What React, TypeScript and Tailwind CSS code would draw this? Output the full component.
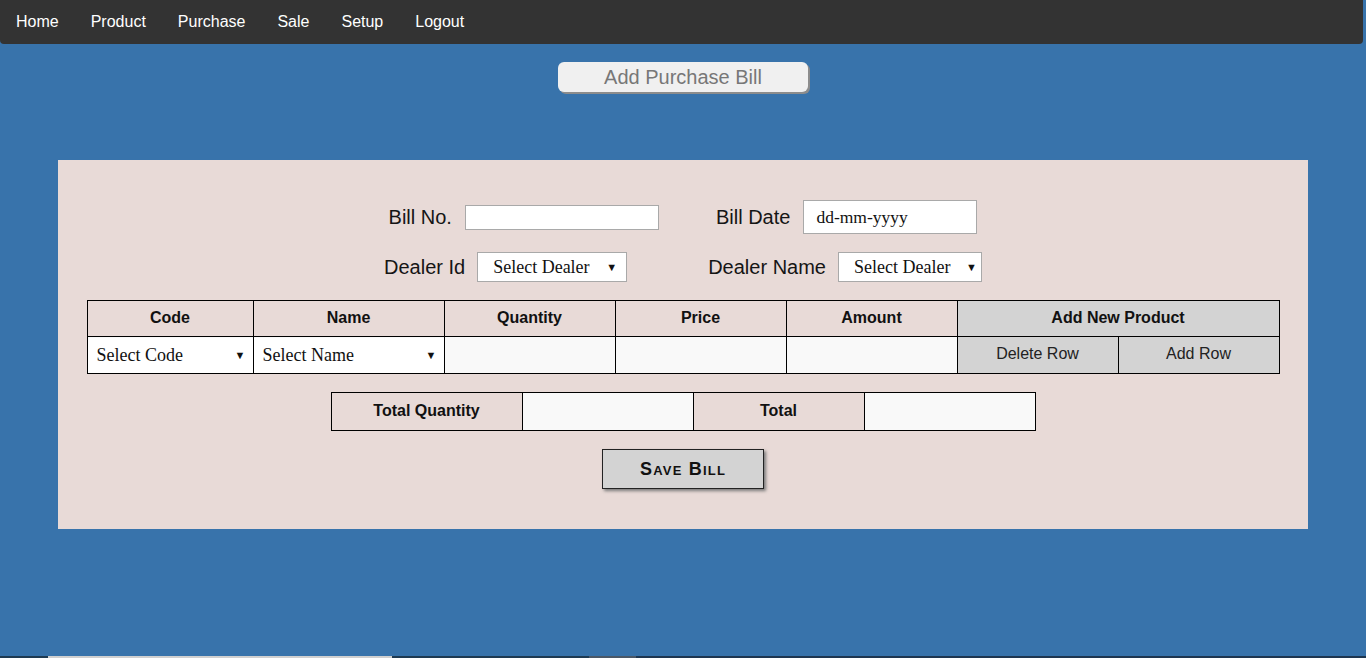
import React from "react";

const NAV = ["Home", "Product", "Purchase", "Sale", "Setup", "Logout"];

function FakeSelect({ label, className }: { label: string; className: string }) {
  return (
    <div
      className={`flex items-center justify-between bg-white border border-[#a9a9a9] font-['Liberation_Serif',serif] text-[18px] text-[#111] ${className}`}
    >
      <span>{label}</span>
      <span className="text-[11px] leading-none text-[#111]">▼</span>
    </div>
  );
}

export default function App() {
  return (
    <div className="h-[658px] w-[1366px] flex flex-col bg-[#3873ab] font-['Liberation_Sans',Arial,sans-serif] overflow-hidden">
      <div className="flex-1 flex flex-col items-center">
        {/* nav */}
        <nav className="self-start w-[1363px] h-[44px] bg-[#333333] rounded-b-[4px] flex items-center">
          {NAV.map((n) => (
            <a key={n} className="px-4 text-[16px] text-white leading-none">
              {n}
            </a>
          ))}
        </nav>

        {/* title */}
        <div className="mt-[18px] w-[250px] h-[30px] rounded-[6px] bg-[#f0f0f0] shadow-[2px_2px_0_#8c8c8c] flex items-center justify-center text-[20px] text-[#777] leading-none">
          Add Purchase Bill
        </div>

        {/* card */}
        <div className="mt-[68px] w-[1250px] bg-[#e8dad7] pt-[40px] pb-[40px] flex flex-col items-center">
          <div className="flex items-center h-[34px] text-[20px] text-[#151515]">
            <span>Bill No.</span>
            <div className="ml-[13px] w-[194px] h-[25px] bg-white border border-[#a9a9a9]" />
            <span className="ml-[57px]">Bill Date</span>
            <div className="ml-[13px] w-[174px] h-[34px] bg-white border border-[#a9a9a9] flex items-center pl-[12px] font-['Liberation_Serif',serif] text-[17.5px] text-[#111]">
              dd-mm-yyyy
            </div>
          </div>

          <div className="mt-[18px] flex items-center h-[30px] text-[20px] text-[#151515]">
            <span>Dealer Id</span>
            <FakeSelect label="Select Dealer" className="ml-[12px] w-[150px] h-[30px] pl-[15px] pr-[9px]" />
            <span className="ml-[81px]">Dealer Name</span>
            <FakeSelect label="Select Dealer" className="ml-[12px] w-[144px] h-[30px] pl-[15px] pr-[4px]" />
          </div>

          {/* products table */}
          <table className="mt-[18px] w-[1192px] table-fixed border-collapse text-[16px] text-[#111]">
            <colgroup>
              <col className="w-[166px]" />
              <col className="w-[191px]" />
              <col className="w-[171px]" />
              <col className="w-[171px]" />
              <col className="w-[171px]" />
              <col className="w-[161px]" />
              <col className="w-[161px]" />
            </colgroup>
            <thead>
              <tr className="h-[36px]">
                {["Code", "Name", "Quantity", "Price", "Amount"].map((h) => (
                  <th key={h} className="border border-black font-bold text-center p-0 pb-[2px]">
                    {h}
                  </th>
                ))}
                <th colSpan={2} className="border border-black font-bold text-center bg-[#d3d3d3] p-0 pb-[2px]">
                  Add New Product
                </th>
              </tr>
            </thead>
            <tbody>
              <tr className="h-[37px]">
                <td className="border border-black bg-[#f9f9f9] p-0">
                  <FakeSelect label="Select Code" className="bg-transparent border-0 pl-[9px] pr-[7px] h-[35px]" />
                </td>
                <td className="border border-black bg-[#f9f9f9] p-0">
                  <FakeSelect label="Select Name" className="bg-transparent border-0 pl-[9px] pr-[7px] h-[35px]" />
                </td>
                <td className="border border-black bg-[#f9f9f9]" />
                <td className="border border-black bg-[#f9f9f9]" />
                <td className="border border-black bg-[#f9f9f9]" />
                <td className="border border-black bg-[#d3d3d3] text-center text-[#222] pb-[2px]">Delete Row</td>
                <td className="border border-black bg-[#d3d3d3] text-center text-[#222] pb-[2px]">Add Row</td>
              </tr>
            </tbody>
          </table>

          {/* totals */}
          <table className="mt-[18px] w-[704px] table-fixed border-collapse text-[16px] text-[#111]">
            <colgroup>
              <col className="w-[191px]" />
              <col className="w-[171px]" />
              <col className="w-[171px]" />
              <col className="w-[171px]" />
            </colgroup>
            <tbody>
              <tr className="h-[38px]">
                <th className="border border-black font-bold text-center p-0 pb-[2px]">Total Quantity</th>
                <td className="border border-black bg-[#f9f9f9]" />
                <th className="border border-black font-bold text-center p-0 pb-[2px]">Total</th>
                <td className="border border-black bg-[#f9f9f9]" />
              </tr>
            </tbody>
          </table>

          <button className="mt-[18px] w-[162px] h-[40px] bg-[#d3d3d3] border border-[#222] shadow-[2px_2px_3px_#7a7a7a] text-[18px] font-bold text-[#111] [font-variant:small-caps] tracking-[1.2px]">
            Save Bill
          </button>
        </div>
      </div>

      {/* bottom strip */}
      <div className="h-[2px] flex">
        <div className="w-[48px] bg-[#1e3a52]" />
        <div className="w-[344px] bg-[#d0d0d0]" />
        <div className="w-[197px] bg-[#1e3a52]" />
        <div className="w-[47px] bg-[#4a5868]" />
        <div className="flex-1 bg-[#1e3650]" />
      </div>
    </div>
  );
}
